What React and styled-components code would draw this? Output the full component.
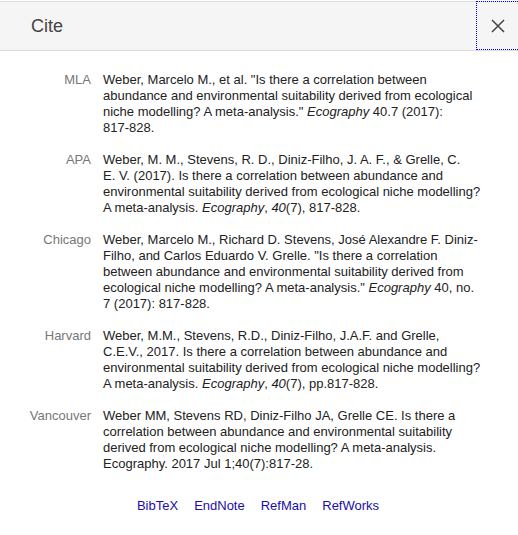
import React from "react";
import styled, { createGlobalStyle } from "styled-components";

const Global = createGlobalStyle`
  html, body { margin: 0; padding: 0; background: #fff; }
  body { font-family: Arial, "Liberation Sans", sans-serif; }
`;

const Page = styled.div`
  padding-top: 1px;
  width: 518px;
`;

const Header = styled.div`
  display: flex;
  align-items: center;
  height: 48px;
  background: #f5f5f5;
  border-top: 1px solid #dcdcdc;
  border-bottom: 1px solid #dcdcdc;
`;

const Title = styled.h2`
  flex: 1;
  margin: 0;
  padding-left: 31px;
  font-size: 18px;
  font-weight: normal;
  color: #444;
  line-height: 48px;
`;

const Close = styled.button`
  width: 42px;
  height: 49px;
  align-self: flex-start;
  margin-top: -1px;
  border: 1px dotted #0000ee;
  border-right: none;
  background: transparent;
  padding: 0;
  display: flex;
  align-items: center;
  justify-content: center;
  cursor: pointer;
`;

const Table = styled.div`
  display: grid;
  grid-template-columns: 91px 378px;
  column-gap: 12px;
  row-gap: 16px;
  padding-top: 21px;
  font-size: 13px;
  line-height: 16px;
`;

const Label = styled.div`
  text-align: right;
  color: #777;
`;

const Citation = styled.div`
  color: #222;
`;

const Keep = styled.span`
  white-space: nowrap;
`;

const Links = styled.div`
  display: flex;
  justify-content: center;
  gap: 16px;
  padding-top: 26px;
  padding-right: 2px;
  font-size: 13px;
  line-height: 16px;
`;

const Link = styled.a`
  color: #1a0dab;
  text-decoration: none;
`;

const cites = [
  ["MLA", <>Weber, Marcelo M., et al. "Is there a correlation between abundance and environmental suitability derived from ecological niche modelling? A meta-analysis." <i>Ecography</i> 40.7 (2017): <Keep>817-828.</Keep></>],
  ["APA", <>Weber, M. M., Stevens, R. D., Diniz-Filho, J. A. F., &amp; Grelle, C. <Keep>E. V.</Keep> (2017). Is there a correlation between abundance and environmental suitability derived from ecological niche modelling? A meta-analysis. <i>Ecography</i>, <i>40</i>(7), 817-828.</>],
  ["Chicago", <>Weber, Marcelo M., Richard D. Stevens, José Alexandre F. Diniz-Filho, and Carlos Eduardo V. Grelle. "Is there a correlation between abundance and environmental suitability derived from ecological niche modelling? A meta-analysis." <i>Ecography</i> 40, no. 7 (2017): 817-828.</>],
  ["Harvard", <>Weber, M.M., Stevens, R.D., Diniz-Filho, J.A.F. and Grelle, C.E.V., 2017. Is there a correlation between abundance and environmental suitability derived from ecological niche modelling? A meta-analysis. <i>Ecography</i>, <i>40</i>(7), pp.817-828.</>],
  ["Vancouver", <>Weber MM, Stevens RD, Diniz-Filho JA, Grelle CE. Is there a correlation between abundance and environmental suitability derived from ecological niche modelling? A meta-analysis. Ecography. 2017 Jul 1;40(7):817-28.</>],
];

export default function App() {
  return (
    <Page>
      <Global />
      <Header>
        <Title>Cite</Title>
        <Close aria-label="Close">
          <svg width="14" height="14" viewBox="0 0 14 14">
            <path d="M1 1 L13 13 M13 1 L1 13" stroke="#444" strokeWidth="1.5" fill="none" />
          </svg>
        </Close>
      </Header>
      <Table>
        {cites.map(([l, c]) => (
          <React.Fragment key={l}>
            <Label>{l}</Label>
            <Citation>{c}</Citation>
          </React.Fragment>
        ))}
      </Table>
      <Links>
        <Link href="#">BibTeX</Link>
        <Link href="#">EndNote</Link>
        <Link href="#">RefMan</Link>
        <Link href="#">RefWorks</Link>
      </Links>
    </Page>
  );
}
